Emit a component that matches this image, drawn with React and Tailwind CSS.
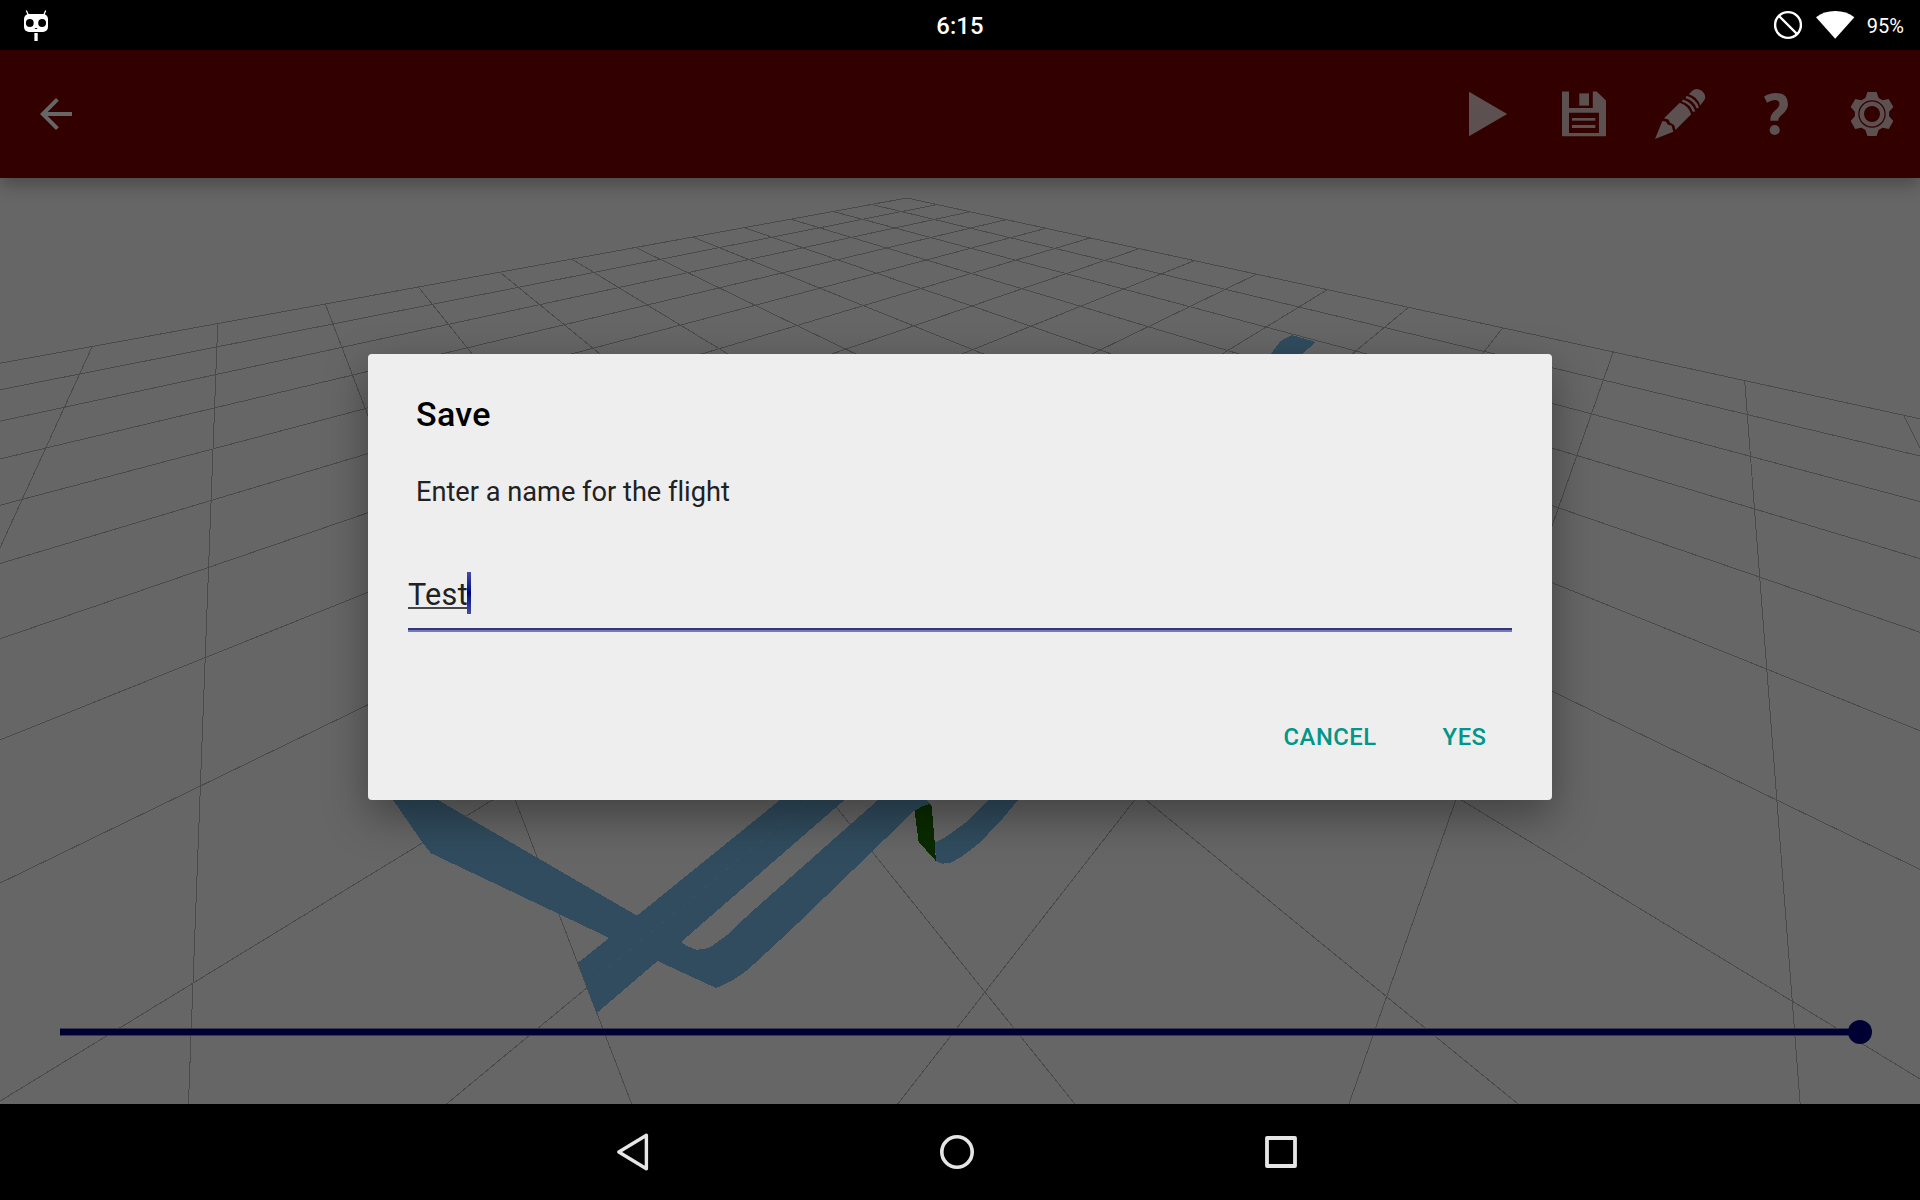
import React from "react";

const APEX = [907, 198];
const VP_LEFT = [228, 50];
const VP_RIGHT = [1719.3, 50];
const G = -0.042485;
const H = -0.04173;

/* Projects ground-plane cell (i, j) onto the screen. */
function project(i, j) {
  const w = 1 + G * i + H * j;
  return [
    (APEX[0] + VP_LEFT[0] * G * i + VP_RIGHT[0] * H * j) / w,
    (APEX[1] + VP_LEFT[1] * G * i + VP_RIGHT[1] * H * j) / w,
  ];
}

const gridLines = [];
for (let n = 0; n <= 22; n++) {
  const endJ = (0.97 + G * n) / -H;
  if (endJ > 0) gridLines.push([project(n, 0), project(n, endJ)]);
  const endI = (0.97 + H * n) / -G;
  if (endI > 0) gridLines.push([project(0, n), project(endI, n)]);
}

function gearPath() {
  const pts = [];
  for (let k = 0; k < 6; k++) {
    const t = (k * Math.PI) / 3;
    for (const [x, y] of [[-6.6, -16], [-4.6, -22], [4.6, -22], [6.6, -16]]) {
      const px = 24 + x * Math.cos(t) - y * Math.sin(t);
      const py = 24 + x * Math.sin(t) + y * Math.cos(t);
      pts.push(`${px.toFixed(2)} ${py.toFixed(2)}`);
    }
  }
  return `M${pts.join("L")}Z`;
}

function StatusBar() {
  return (
    <header className="flex h-[50px] shrink-0 items-center bg-black text-white">
      <div className="flex flex-1 pl-5">
        <svg width="32" height="50" viewBox="20 0 32 50" fill="#fff">
          <path d="M26.3 10.5L28.6 15.5M45.7 10.5L43.6 15.5" stroke="#fff" strokeWidth="1.3" />
          <rect x="24" y="14" width="24" height="18" rx="5" />
          <circle cx="29.8" cy="23" r="3.9" fill="#000" />
          <circle cx="42.1" cy="23" r="3.9" fill="#000" />
          <rect x="34.8" y="28" width="2.4" height="0.9" fill="#000" />
          <rect x="34.4" y="33" width="3.3" height="8" />
        </svg>
      </div>
      <div className="-ml-1 pt-[3px] text-[23.8px] leading-[47px] font-medium tracking-[0.2px]">6:15</div>
      <div className="flex flex-1 items-center justify-end pr-4">
        <svg width="96" height="50" viewBox="1770 0 96 50">
          <circle cx="1788" cy="25" r="12.9" fill="none" stroke="#fff" strokeWidth="2.4" />
          <path d="M1779 16L1797 34" stroke="#fff" strokeWidth="2.4" />
          <path d="M1816 17.3Q1824 11 1835.2 11T1854.4 17.3L1835.2 38.8Z" fill="#fff" />
        </svg>
        <span className="w-[38px] pt-[3px] text-right text-[20px] leading-[47px]">95%</span>
      </div>
    </header>
  );
}

function Action({ children }) {
  return (
    <button className="flex h-full w-24 items-center justify-center">
      <svg className="overflow-visible" width="48" height="48" viewBox="0 0 48 48" fill="#5c5050">
        {children}
      </svg>
    </button>
  );
}

function Toolbar() {
  return (
    <div className="relative z-10 flex h-32 shrink-0 items-center justify-between bg-[#330000] pl-8 shadow-[0_8px_16px_-1px_rgba(0,0,0,0.28)]">
      <svg width="48" height="48" viewBox="0 0 24 24" fill="#666">
        <path d="M20 11H7.83l5.59-5.59L12 4l-8 8 8 8 1.41-1.41L7.83 13H20v-2z" />
      </svg>
      <div className="flex h-full">
        <Action>
          <path d="M5 1.7L43.2 24L5 46.2Z" />
        </Action>
        <Action>
          <path
            fillRule="evenodd"
            d="M2 1.5H9V18H32.8V1.5H36.7L46 10.5V46.3H2ZM9 22.7V43H39V22.7Z"
          />
          <rect x="19.3" y="3.4" width="9.7" height="12.2" />
          <rect x="12" y="28" width="23.3" height="2.7" />
          <rect x="12" y="35" width="23.3" height="3" />
        </Action>
        <Action>
          <path d="M-1 49L6.3 31L9.8 31.4L11.8 34.6L15.6 35.8L17.3 41.8Z" />
          <path d="M8 28.3L23.7 12.7Q32.5 15.5 35.2 24.2L19.5 40L18.3 35.3L13.8 32.4L12.4 29.6Z" />
          <path
            d="M26.4 10.6Q35.3 13.2 38.1 21.6M30 7Q39.2 9.8 41.8 18"
            fill="none"
            stroke="#5c5050"
            strokeWidth="2.5"
          />
          <path d="M32.8 4.2L36.3 .7Q40.5 -2.8 45.7 .8Q51 5.2 48.4 10L44.2 15.4Q41.5 6.8 32.8 4.2Z" />
        </Action>
        <Action>
          <path d="M12 6.5Q17.5 3 23.8 3Q36 3 36 14Q36 19.5 30.7 24Q26.3 27.5 26.3 30.7H18.2Q18 24.5 23.3 20.3Q27.4 17 27.4 14Q27.4 9.9 22.8 9.9Q19.3 9.9 15 12.8Z" />
          <circle cx="22.7" cy="40" r="5.1" />
        </Action>
        <Action>
          <path d={gearPath()} />
          <circle cx="24" cy="24" r="13.1" fill="none" stroke="#330000" strokeWidth="1.2" />
          <circle cx="24" cy="24" r="8" fill="#330000" />
        </Action>
      </div>
    </div>
  );
}

function FlightScene() {
  return (
    <svg className="block h-full w-full" viewBox="0 178 1920 926" shapeRendering="crispEdges">
      <rect y="178" width="1920" height="926" fill="#666" />
      <g stroke="#4a4a4a" strokeWidth="1">
        {gridLines.map(([a, b], n) => (
          <line key={n} x1={a[0]} y1={a[1]} x2={b[0]} y2={b[1]} />
        ))}
      </g>
      <g fill="#304c5e">
        <path d="M1270.6 354.5L1280 341.5L1291.4 335L1316 342L1301 355Z" />
        <path d="M386 790L393 800L423 843.3L431 853.3L608 937.3L657.5 961L716 988Q735 981 750 967.7L789 931.7L872 851.7L913 811.7L922 807L931 805L927 800L920 790H890L878 800L750 913.3L727 935L711 946.7Q704 950 696 949.5L688 946.5L681 942L637 915.7L438 800L421 790Z" />
        <path d="M793 790L780 800L637 915.7L578 962.7L596.5 1013.3L657.5 961L681.4 941.7L844.4 800L856 790Z" />
        <path d="M996 790L989 800L966 822.3L945.4 837.3L934.8 842.7L936 861L942 863.7L950 863L961.5 856.7L979.8 842.7L1002.8 818.3L1018 800L1024 790Z" />
      </g>
      <path d="M805 805L589.6 983" stroke="#3c4f5b" strokeWidth="1" strokeDasharray="5 9" />
      <path
        d="M914.6 811L921.8 806.5L929.3 804L931.6 806L934 833L935.9 861L918.6 841.7Z"
        fill="#0a2b00"
      />
    </svg>
  );
}

function SeekBar() {
  return (
    <div className="absolute right-12 bottom-[60px] left-[60px] flex h-6 items-center">
      <div className="h-2 flex-1 border-y border-[#383850] bg-[#000033]" />
      <div className="-ml-1 size-6 rounded-full bg-[#000033]" />
    </div>
  );
}

function SaveDialog() {
  return (
    <div className="absolute inset-0 z-20 flex items-start justify-center pt-[354px]">
      <section className="flex h-[446px] w-[1184px] flex-col rounded bg-[#eeeeee] px-10 pt-10 shadow-[0_16px_44px_rgba(0,0,0,0.36)]">
        <h1 className="px-2 text-[34px] leading-10 font-medium tracking-[0.3px] text-black">Save</h1>
        <p className="mt-[42px] px-2 text-[27.2px] leading-8 text-[#212121] [font-variant-ligatures:none]">
          Enter a name for the flight
        </p>
        <div className="mt-16 flex h-[60px] items-start border-b-2 border-[#7878b8]">
          <div className="flex h-[58px] flex-1 items-start border-b-2 border-[#36367c]">
            <div className="h-[37px] border-b-2 border-[#454847] text-[30.6px] leading-[46px] tracking-[0.3px] text-[#212121]">
              Test
            </div>
            <div className="-ml-px h-[42px] w-1 bg-linear-to-b from-[#4a4aa6] via-[#000080] to-[#4a4aa6]" />
          </div>
        </div>
        <div className="mt-[91px] flex justify-end gap-[66px] pr-[25.5px] text-[23.8px] leading-7 font-medium tracking-[0.5px] text-[#009688]">
          <button>CANCEL</button>
          <button>YES</button>
        </div>
      </section>
    </div>
  );
}

function NavBar() {
  return (
    <nav className="flex h-24 shrink-0 items-center bg-black pl-[471px]">
      <button className="flex w-[324px] justify-center">
        <svg width="48" height="48" viewBox="0 0 48 48">
          <path
            d="M37.4 7.3V40.7L9.8 24Z"
            fill="none"
            stroke="#e6e6e6"
            strokeWidth="3.4"
            strokeLinejoin="round"
          />
        </svg>
      </button>
      <button className="flex w-[324px] justify-center">
        <svg width="48" height="48" viewBox="0 0 48 48">
          <circle cx="24" cy="24" r="15.2" fill="none" stroke="#e6e6e6" strokeWidth="3.6" />
        </svg>
      </button>
      <button className="flex w-[324px] justify-center">
        <svg width="48" height="48" viewBox="0 0 48 48">
          <rect
            x="10"
            y="10"
            width="28"
            height="28"
            fill="none"
            stroke="#e6e6e6"
            strokeWidth="3.8"
            strokeLinejoin="round"
          />
        </svg>
      </button>
    </nav>
  );
}

export default function App() {
  return (
    <div className="relative flex h-[1200px] w-[1920px] flex-col overflow-hidden bg-[#666] font-['Roboto',sans-serif]">
      <StatusBar />
      <Toolbar />
      <main className="relative h-[926px] shrink-0">
        <FlightScene />
        <SeekBar />
      </main>
      <NavBar />
      <SaveDialog />
    </div>
  );
}
